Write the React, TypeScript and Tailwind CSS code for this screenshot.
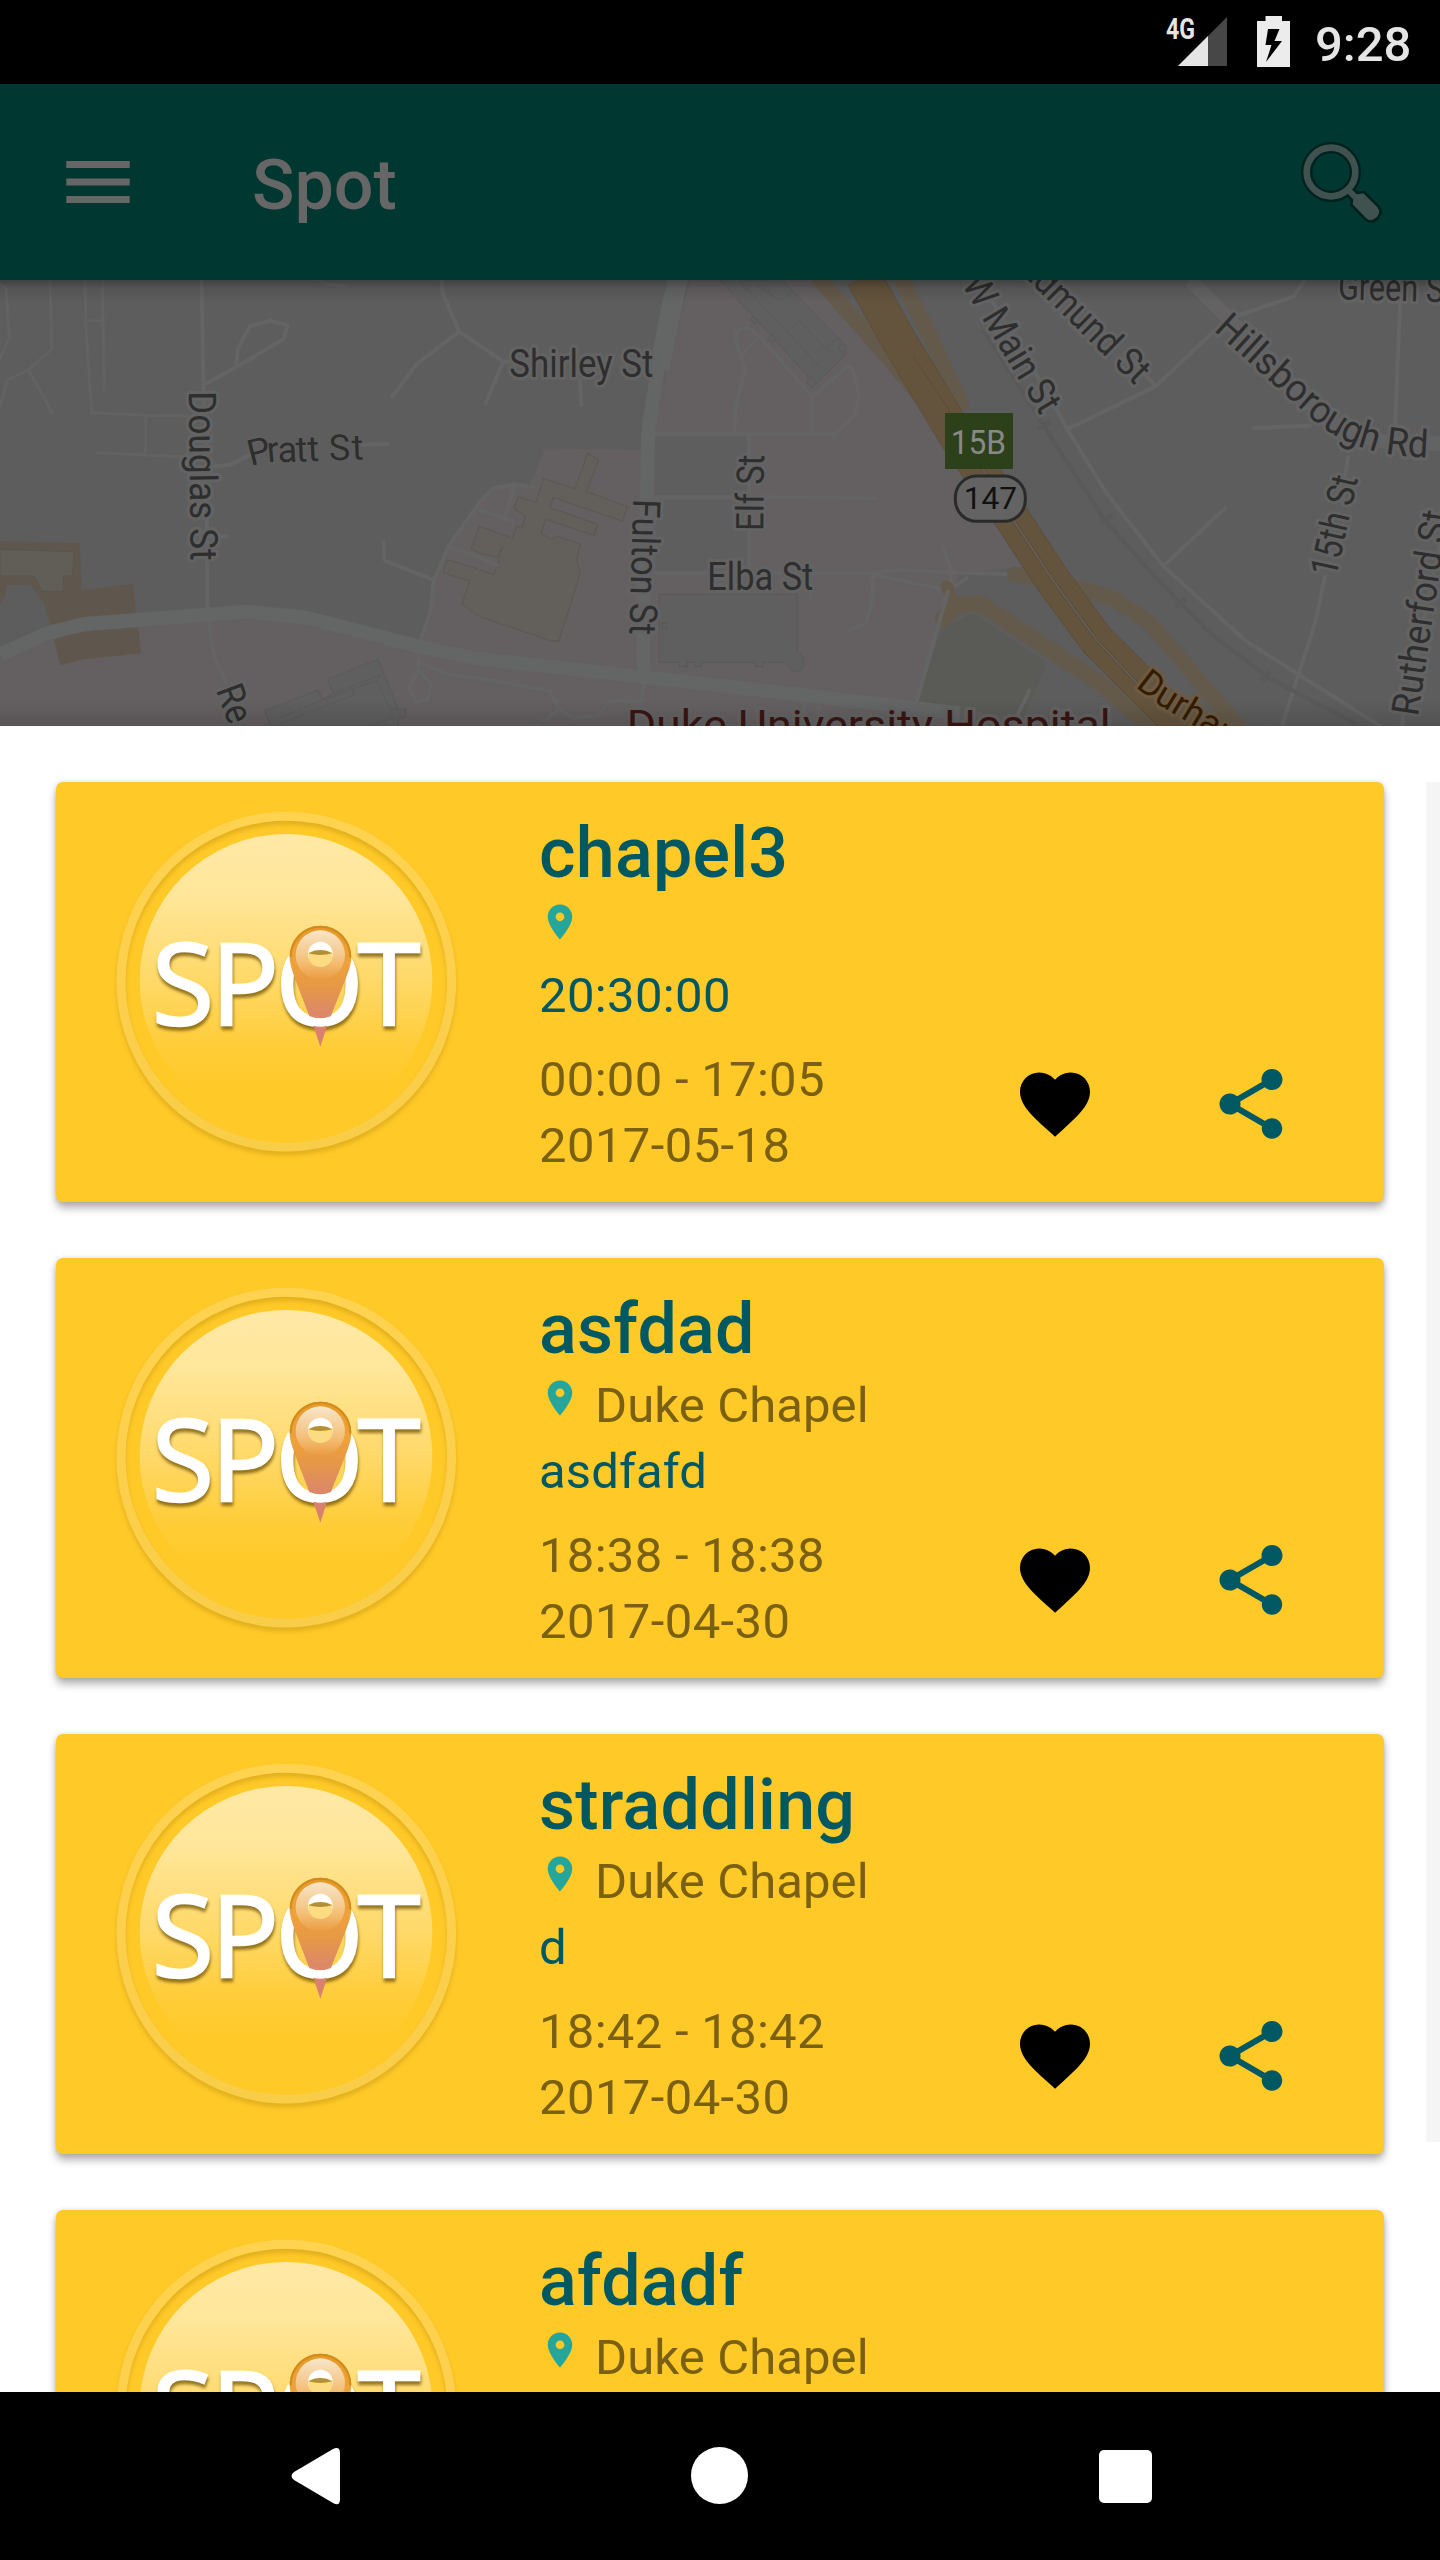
import React from "react";

type Spot = { title: string; place: string; note: string; time: string; date: string };

const spots: Spot[] = [
  { title: "chapel3", place: "", note: "20:30:00", time: "00:00 - 17:05", date: "2017-05-18" },
  { title: "asfdad", place: "Duke Chapel", note: "asdfafd", time: "18:38 - 18:38", date: "2017-04-30" },
  { title: "straddling", place: "Duke Chapel", note: "d", time: "18:42 - 18:42", date: "2017-04-30" },
  { title: "afdadf", place: "Duke Chapel", note: "", time: "", date: "" },
];

function StatusBar() {
  return (
    <div className="flex h-[84px] shrink-0 items-start bg-black pl-[1166px]">
      <svg width="62" height="84" viewBox="0 0 62 84">
        <path d="M61 17V66H12Z" fill="#474747" />
        <path d="M42 36V66H12Z" fill="#e5e5e5" />
        <text x="0" y="39" fontSize="29" fontWeight="700" textLength="29" lengthAdjust="spacingAndGlyphs" fill="#e5e5e5">4G</text>
      </svg>
      <svg className="ml-[29px]" width="33" height="84" viewBox="0 0 33 84">
        <path d="M8.5 16H25V21H33V67H0V21H8.5Z" fill="#ececec" />
        <path d="M11 29H22.5L17.5 41H25L9 62L14.500 45H8.500Z" fill="#000" />
      </svg>
      <div className="ml-[25px] mt-[15px] text-[49px] font-medium leading-[60px] text-[#e5e5e5]">9:28</div>
    </div>
  );
}

function Toolbar() {
  return (
    <div className="flex h-[196px] shrink-0 items-start bg-[#003731]">
      <svg className="ml-[66px] mt-[77px]" width="64" height="42" viewBox="0 0 64 42" fill="#666">
        <rect x=".3" width="63.400" height="7" />
        <rect x=".3" y="17.500" width="63.400" height="7" />
        <rect x=".3" y="35" width="63.400" height="7" />
      </svg>
      <div className="ml-[122px] mt-[58px] text-[70px] font-medium leading-[86px] text-[#666]">Spot</div>
      <svg className="ml-auto mr-[52px] mt-[52px]" width="92" height="92" viewBox="590 408 276 276">
        <g stroke="#00211d" strokeLinejoin="round" fill="none">
          <circle cx="695" cy="516" r="73" strokeWidth="34" />
          <path d="M745 568L772 596" strokeWidth="34" />
          <path d="M762 596Q760 584 772 583L792 580L834 622Q846 636 832 652Q816 668 800 654L760 613Z" strokeWidth="16" fill="#00211d" />
        </g>
        <circle cx="695" cy="516" r="73" fill="none" stroke="#3f524f" strokeWidth="20" />
        <path d="M745 568L772 596" stroke="#3f524f" strokeWidth="18" />
        <path d="M762 596Q760 584 774 583L792 580L834 622Q846 636 832 652Q816 668 800 654L760 613Z" fill="#3f524f" />
      </svg>
    </div>
  );
}

const halo = { stroke: "#636363", strokeWidth: 20, strokeLinejoin: "round" as const, paintOrder: "stroke" };

/* Map coordinates are three units to the pixel. */
function CityMap() {
  return (
    <svg className="block shrink-0" width="1440" height="446" viewBox="0 30 4320 1338">
      <defs>
        <linearGradient id="barShadow" x1="0" x2="0" y1="0" y2="1">
          <stop offset="0" stopColor="#000" stopOpacity=".3" />
          <stop offset=".4" stopColor="#000" stopOpacity=".1" />
          <stop offset="1" stopColor="#000" stopOpacity="0" />
        </linearGradient>
        <linearGradient id="sheetShadow" x1="0" x2="0" y1="0" y2="1">
          <stop offset="0" stopColor="#000" stopOpacity="0" />
          <stop offset="1" stopColor="#000" stopOpacity=".12" />
        </linearGradient>
        <path id="hills" d="M3640 181L3925 437Q4005 512 4120 542Q4190 563 4340 563" />
        <path id="durham" d="M3405 1250L3470 1300L3700 1440" />
      </defs>
      <rect y="30" width="4320" height="1338" fill="#5d5d5d" />

      {/* campus grounds */}
      <g fill="#645f60">
        <path d="M0 1160L130 1090L250 1062L740 1025L920 1043L1260 1130L1295 1020L1305 930L1345 830L1420 710L1480 655L1590 645L1635 535L1930 540V1200L2880 1320V1368H0Z" />
        <path d="M2070 30H2440L2860 530L3090 890L2880 910L2820 1060L2740 1320L1930 1220V540L1990 340Z" />
      </g>
      <g fill="#5e5e5e">
        <rect x="1965" y="498" width="280" height="177" />
        <rect x="1965" y="690" width="280" height="217" />
      </g>
      <path d="M2740 1300L2830 1070L2920 1030L3140 1180L3070 1345Z" fill="#5a5a57" />

      {/* school lots */}
      <g fill="#5f574d">
        <path d="M0 813L240 820L245 960L400 942L408 1030L250 1045L150 1065L130 995L90 945H20Q15 990 0 1005Z" />
        <path d="M162 1107L250 1085L415 1072L423 1150L250 1168L180 1186Z" />
      </g>
      <path d="M0 838L222 845L217 918H190V964H125L110 930L100 918H0Z" fill="#615e58" stroke="#59554d" strokeWidth="3" />
      <path d="M20 945H88L130 995L145 1060L0 1120V1005Q18 985 20 945Z" fill="#5d5d5d" />

      {/* buildings */}
      <g fill="#635f5b" stroke="#5a564e" strokeWidth="2.500">
        <path d="M1763 549L1796 569L1760 665L1882 710L1868 754L1660 682L1650 713L1793 763L1783 797L1637 748L1624 790L1655 810L1668 797L1741 822L1730 870L1741 908L1677 1113H1655L1440 1040L1410 1020L1386 1003L1409 933L1330 908L1340 870L1380 880L1440 900L1483 914L1508 830L1492 862L1440 850L1414 836L1438 768L1537 805L1550 768L1567 772L1577 740L1542 715L1555 680L1608 697L1631 625L1725 656Z" />
      </g>
      <g fill="#5f5f5f" stroke="#585858" strokeWidth="2.500">
        <path d="M1978 973H2392V1145Q2418 1160 2412 1190Q2385 1225 2355 1177H2290V1190H2266V1177H2104V1190H2084V1177H2062V1190H2038V1177H1978Z" />
        <path d="M2160 30L2430 325L2450 340L2538 252L2530 220L2345 30Z" />
        <path d="M2215 30L2455 285M2270 45L2342 92L2378 62M2362 183L2398 152L2490 250M2478 235L2510 207" fill="none" />
        <path d="M982 1228L1134 1168L1195 1320L1216 1316V1342L1195 1345V1368H812L795 1322L955 1260L968 1290L1000 1270Z" />
        <path d="M1000 1270L1142 1215L1130 1235L1172 1320L1195 1312M835 1345L900 1318L908 1335L840 1362M912 1312L978 1286L985 1304L918 1333M985 1285L1055 1256L1062 1275L992 1303M1065 1254L1130 1232M1115 1368L1180 1342" fill="none" />
        <path d="M2255 140L2275 150L2265 162L2253 152ZM2315 193L2328 205L2318 220L2304 208ZM2432 320L2450 337L2436 354L2420 338ZM2526 220L2540 235L2528 247L2515 232Z" />
        <rect x="1987" y="1060" width="13" height="15" />
      </g>

      {/* local streets */}
      <g fill="none" stroke="#646464" strokeWidth="12" strokeLinejoin="round" strokeLinecap="round">
        <g strokeWidth="9" stroke="#626262">
          <path d="M0 40L18 55L28 205L0 265M150 30L155 238L85 300L22 330L0 410M85 300L157 428M255 30L258 170L275 428L440 436L565 438M437 440V545M307 30L313 358M258 152H307M292 548L550 560M960 30L975 42L1035 48" />
        </g>
        <path d="M605 30L610 345L710 290L850 208L863 166L812 152L750 168L713 238L708 290M1325 30L1328 70L1378 185L1250 282L1177 380M1378 185L1510 275L1560 275M1510 275L1457 400M1740 330L1744 405M610 345L620 570L622 1020M630 590L690 584L750 555M1085 524L1162 522M622 800L680 799M625 1050L643 1160L680 1240M1150 815L1154 872L1302 930M1480 655L1440 695L1345 830L1302 930L1290 1030L1258 1120L1254 1205L1226 1255L1252 1298L1285 1284L1292 1240L1254 1200M1254 1175L1340 1212L1440 1225L1648 1262L1678 1318L1610 1368M1678 1318L1722 1345L1795 1335L1830 1292L1925 1295L1930 1240M1480 655L1545 643L1600 652M1545 643L1515 742M1440 720L1538 752M1345 830L1440 862L1490 885" />
        <path d="M1965 493H2505L2560 440L2578 380L2557 292L2540 292L2437 380V490M2437 380L2278 198L2245 172L2212 182L2206 212L2222 260L2278 198M2222 260L2237 295L2206 415L2204 490M2247 495V900M1965 681H2300L2623 685M1965 909H2620L2700 900L2880 908L3042 913M2620 915L2845 960L2748 1300M2620 915L2616 1000L2596 1060L2545 1080M2830 835L2855 905L2845 960L2900 925M2433 930V990M2415 1300L2405 1368M2460 1310L2440 1368" />
        <path d="M2980 100L3160 400L3202 478L3320 670L3490 888L3740 1115L4140 1368M3202 478L3468 348L3640 185M3400 280L3468 348M3720 135L3880 80L3915 30M4200 100L4185 480M3760 474L3930 467M4045 560L4030 640M3975 920L3945 1060L3890 1230L3845 1368M3490 888L3675 715M4320 820L4205 1368M3088 1262L3050 1340" />
      </g>
      <g fill="none" stroke="#646565" strokeWidth="42" strokeLinejoin="round">
        <path d="M0 1155L135 1092L250 1062L740 1025L920 1043L1260 1130L1440 1167L1940 1222L2500 1285L2880 1330" />
        <path d="M2035 20L2000 170L1972 310L1945 480L1940 690L1930 960V1220" />
        <path d="M2035 20L2005 160L1978 300" strokeWidth="60" />
        <path d="M3570 30L3670 130L3950 420Q4060 515 4210 520H4320" strokeWidth="44" stroke="#636363" />
      </g>

      {/* rail line */}
      <g fill="none" stroke="#595959">
        <path d="M2950 180L3130 465L3310 745L3460 915L3620 1080L3800 1220L4080 1368" strokeWidth="12" />
        <path d="M3115 478L3150 455M3302 757L3337 736M3527 1010L3557 985M3785 1232L3810 1205" strokeWidth="14" />
      </g>

      {/* expressway and ramps */}
      <g fill="none" stroke="#645a4b" strokeLinejoin="round">
        <path d="M2450 20L2680 280L2860 500" strokeWidth="46" />
        <path d="M2700 20L2800 220L2890 420" strokeWidth="48" />
        <path d="M3045 914L3170 935L3340 985L3450 1060L3740 1400" strokeWidth="46" strokeLinecap="round" />
        <path d="M2830 1045L2870 1005L2940 1000L3300 1240L3450 1368" strokeWidth="50" strokeLinecap="round" />
        <path d="M2840 950L2855 980" strokeWidth="36" strokeLinecap="round" />
      </g>
      <path d="M2590 20L2690 200L2870 500L3030 735L3158 930L3290 1110L3460 1280L3560 1380" fill="none" stroke="#594c37" strokeWidth="107" />
      <path d="M2590 20L2690 200L2870 500L3030 735L3158 930L3290 1110L3460 1280L3560 1380" fill="none" stroke="#64543d" strokeWidth="103" />
      <path d="M2945 590L3030 735L3158 930L3290 1110L3430 1260" fill="none" stroke="#594c37" strokeWidth="10" />
      <path d="M2945 590L3030 735L3158 930L3290 1110L3430 1260" fill="none" stroke="#646059" strokeWidth="5" />
      <path d="M2740 260L2860 440" fill="none" stroke="#594c37" strokeWidth="3" />
      <path d="M2748 1300L2845 960" stroke="#646464" strokeWidth="12" />

      {/* labels */}
      <g fontSize="115" fill="#2e2e2e" {...halo}>
        <text x="1528" y="320" textLength="432" lengthAdjust="spacingAndGlyphs">Shirley St</text>
        <text transform="rotate(-2 800 578)" fontSize="108" strokeWidth="4" x="752 803 834 888 923 958 988 1056" y="586 578 578 578 578 578 578 578" rotate="-12 -3 0 0 0 0 0 0">Pratt St</text>
        <text transform="translate(566 364) rotate(89.300)" textLength="508" lengthAdjust="spacingAndGlyphs">Douglas St</text>
        <text transform="translate(647 1260) rotate(69.500)" textLength="115" lengthAdjust="spacingAndGlyphs">Re</text>
        <text transform="translate(1900 686) rotate(91.700)" textLength="408" lengthAdjust="spacingAndGlyphs">Fulton St</text>
        <text transform="translate(2290 783) rotate(-89.500)" textLength="229" lengthAdjust="spacingAndGlyphs">Elf St</text>
        <text x="2122" y="959" textLength="318" lengthAdjust="spacingAndGlyphs">Elba St</text>
        <text transform="translate(2884 42) rotate(59)" textLength="462" lengthAdjust="spacingAndGlyphs">W Main St</text>
        <text transform="translate(3053 1) rotate(44.500)" textLength="494" lengthAdjust="spacingAndGlyphs">Edmund St</text>
        <text><textPath href="#hills" textLength="772" lengthAdjust="spacingAndGlyphs">Hillsborough Rd</textPath></text>
        <text transform="translate(4013 88) rotate(1.500)" textLength="348" lengthAdjust="spacingAndGlyphs">Green St</text>
        <text transform="translate(4008 924) rotate(-77.500)" textLength="306" lengthAdjust="spacingAndGlyphs">15th St</text>
        <text transform="translate(4254 1340) rotate(-81.500)" textLength="620" lengthAdjust="spacingAndGlyphs">Rutherford St</text>
        <text x="1880" y="1409" fontSize="128" fill="#3a1512" textLength="1452" lengthAdjust="spacingAndGlyphs">Duke University Hospital</text>
        <text fontSize="106" fill="#351a00" stroke="#6b5b44"><textPath href="#durham">Durham</textPath></text>
      </g>

      {/* road shields */}
      <rect x="2835" y="429" width="204" height="168" fill="#2c411a" />
      <text x="2852" y="552" fontSize="101" fill="#898989" textLength="166" lengthAdjust="spacingAndGlyphs">15B</text>
      <rect x="2866" y="618" width="210" height="136" rx="64" fill="#636363" stroke="#2a2a2a" strokeWidth="9" />
      <text x="2891" y="716" fontSize="93" fill="#111" textLength="160" lengthAdjust="spacingAndGlyphs">147</text>

      <rect y="30" width="4320" height="66" fill="url(#barShadow)" />
      <rect y="1290" width="4320" height="78" fill="url(#sheetShadow)" />
    </svg>
  );
}

function SpotLogo() {
  return (
    <svg className="h-[420px] w-[483px] shrink-0" viewBox="48 66 1449 1260">
      <defs>
        <linearGradient id="disc" x1="0" x2="0" y1="0" y2="1">
          <stop offset="0" stopColor="#ffe9a6" />
          <stop offset=".2" stopColor="#ffe69a" />
          <stop offset=".5" stopColor="#ffd968" />
          <stop offset=".72" stopColor="#ffcd39" />
          <stop offset=".86" stopColor="#ffc928" />
          <stop offset="1" stopColor="#ffc928" />
        </linearGradient>
        <linearGradient id="ring" x1="0" x2="0" y1="0" y2="1">
          <stop offset="0" stopColor="#ffd350" />
          <stop offset="1" stopColor="#f9cd48" />
        </linearGradient>
        <linearGradient id="pin" x1="0" x2="0" y1="497" y2="860" gradientUnits="userSpaceOnUse">
          <stop offset="0" stopColor="#e59a26" />
          <stop offset=".3" stopColor="#f0a23a" />
          <stop offset=".5" stopColor="#e79845" />
          <stop offset=".7" stopColor="#dd8a66" />
          <stop offset="1" stopColor="#d97a7c" />
        </linearGradient>
        <linearGradient id="gloss" x1="0" x2="0" y1="0" y2="1">
          <stop offset="0" stopColor="#fff" stopOpacity=".75" />
          <stop offset=".5" stopColor="#fff" stopOpacity=".42" />
          <stop offset="1" stopColor="#fff" stopOpacity="0" />
        </linearGradient>
        <filter id="ringShade" x="-10%" y="-10%" width="120%" height="120%" colorInterpolationFilters="sRGB">
          <feDropShadow dx="0" dy="12" stdDeviation="7" floodColor="#9a7400" floodOpacity=".28" />
        </filter>
        <filter id="textShade" x="-10%" y="-20%" width="120%" height="150%" colorInterpolationFilters="sRGB">
          <feDropShadow dx="2" dy="11" stdDeviation="4" floodColor="#6a4c00" floodOpacity=".72" />
        </filter>
      </defs>
      <circle cx="739" cy="665" r="496" fill="none" stroke="url(#ring)" strokeWidth="27" filter="url(#ringShade)" />
      <circle cx="738" cy="661" r="439" fill="url(#disc)" />
      <text y="795" x="335 512 706 953" fontSize="341" fontWeight="400" fill="#fff" stroke="#fff" strokeWidth="7" filter="url(#textShade)" style={{ fontFamily: '"Open Sans", sans-serif' }}>SPOT</text>
      <path d="M841 497C892 497 934 538 934 592C934 625 905 685 873 768Q841 782 808 768C777 685 749 625 749 592C749 538 790 497 841 497Z" fill="url(#pin)" />
      <path d="M841 500C890 500 931 540 931 592M841 500C792 500 752 540 752 592" fill="none" stroke="#d28b1d" strokeWidth="6" />
      <path d="M820 797Q841 803 861 797L841 860Z" fill="#d9806f" />
      <ellipse cx="841" cy="585" rx="74" ry="74" fill="url(#gloss)" />
      <circle cx="841" cy="582" r="37" fill="#fff" />
      <path d="M805 578Q841 560 877 578Q880 618 841 620Q803 618 805 578Z" fill="#fbdc80" />
      <path d="M805 580Q841 560 877 580Q841 590 805 580Z" fill="#b58f35" />
    </svg>
  );
}

function SpotCard({ spot }: { spot: Spot }) {
  return (
    <article className="flex h-[420px] shrink-0 items-start rounded-[7px] bg-[#ffc928] shadow-[0_6px_9px_rgba(0,0,0,0.3),0_0_5px_rgba(0,0,0,0.12)]">
      <SpotLogo />
      <div className="w-[474px] whitespace-nowrap pt-[28px] text-[49px] leading-[66px] tracking-[0.1px] text-[#7a6013]">
        <h2 className="h-[87px] text-[70px] font-medium leading-[86px] tracking-[0.25px] text-[#005862]">{spot.title}</h2>
        <div className="flex h-[66px] gap-[14px]">
          <svg className="mt-[4px] h-[42px] w-[42px]" viewBox="0 0 24 24" fill="#26a69a">
            <path d="M12 2C8.130 2 5 5.130 5 9c0 5.250 7 13 7 13s7-7.750 7-13c0-3.870-3.130-7-7-7zm0 9.500c-1.380 0-2.500-1.120-2.500-2.500s1.120-2.500 2.500-2.500 2.500 1.120 2.500 2.500-1.120 2.500-2.500 2.500z" />
          </svg>
          <span>{spot.place}</span>
        </div>
        <p className={/\d/.test(spot.note) ? "mb-[18px] h-[66px] tracking-[0.35px] text-[#005862]" : "mb-[18px] h-[66px] text-[#005862]"}>{spot.note}</p>
        <p className="tracking-[0.3px]">{spot.time}</p>
        <p className="tracking-[0.4px]">{spot.date}</p>
      </div>
      <div className="mt-[280px] flex gap-[112px]">
        <svg className="h-[84px] w-[84px]" viewBox="0 0 24 24" fill="#000">
          <path d="M12 21.350l-1.450-1.320C5.400 15.360 2 12.280 2 8.500 2 5.420 4.420 3 7.500 3c1.740 0 3.410.81 4.500 2.090C13.090 3.810 14.760 3 16.500 3 19.580 3 22 5.420 22 8.500c0 3.780-3.400 6.860-8.550 11.540L12 21.350z" />
        </svg>
        <svg className="h-[84px] w-[84px]" viewBox="0 0 24 24" fill="#005862">
          <path d="M18 16.080c-.76 0-1.440.3-1.960.77L8.910 12.700c.05-.23.09-.46.09-.7s-.04-.47-.09-.7l7.050-4.110c.54.5 1.250.81 2.040.81 1.660 0 3-1.340 3-3s-1.340-3-3-3-3 1.340-3 3c0 .24.04.47.09.7L8.040 9.810C7.500 9.310 6.790 9 6 9c-1.660 0-3 1.340-3 3s1.340 3 3 3c.79 0 1.500-.31 2.040-.81l7.120 4.160c-.05.21-.08.43-.08.65 0 1.610 1.310 2.920 2.920 2.920 1.610 0 2.920-1.310 2.920-2.920s-1.310-2.920-2.920-2.920z" />
        </svg>
      </div>
    </article>
  );
}

function NavBar() {
  return (
    <nav className="flex h-[168px] shrink-0 items-start gap-[351px] bg-black pl-[291px] pt-[55px]">
      <svg width="49" height="59" viewBox="0 0 49 59" fill="#fff">
        <path d="M42 2Q49 -1 49 6V52Q49 60 42 56L3 33Q-2 29 3 25Z" />
      </svg>
      <div className="h-[57px] w-[57px] rounded-full bg-white" />
      <div className="mt-[3px] h-[53px] w-[53px] rounded-[5px] bg-white" />
    </nav>
  );
}

export default function App() {
  return (
    <div className="flex h-[2560px] w-[1440px] flex-col overflow-hidden bg-black font-[Roboto,sans-serif]">
      <StatusBar />
      <Toolbar />
      <CityMap />
      <main className="relative flex min-h-0 flex-1 flex-col gap-14 overflow-hidden bg-white px-14 pt-14">
        {spots.map((spot) => (
          <SpotCard key={spot.title} spot={spot} />
        ))}
        <div className="absolute right-0 top-14 h-[1360px] w-[14px] bg-[#f5f5f5]" />
      </main>
      <NavBar />
    </div>
  );
}
